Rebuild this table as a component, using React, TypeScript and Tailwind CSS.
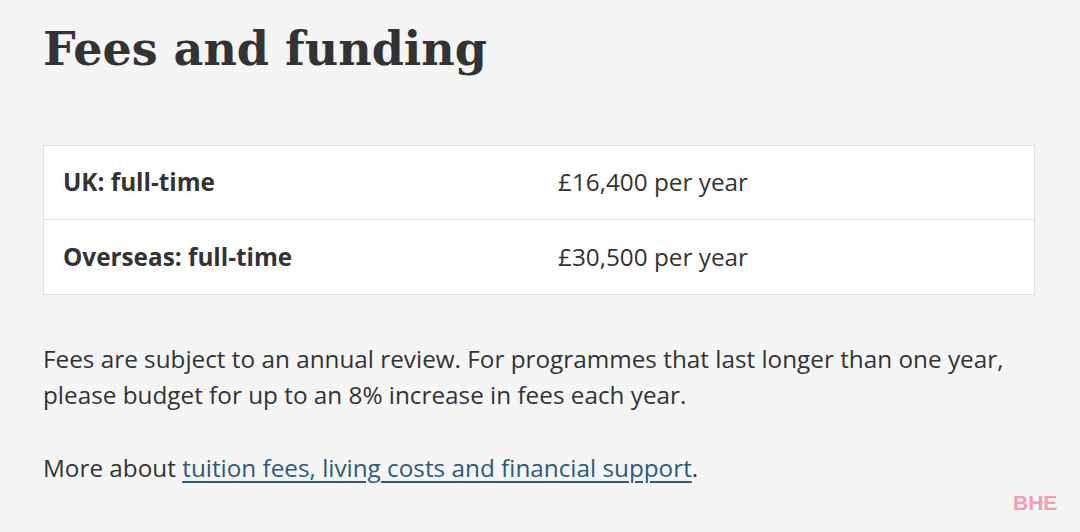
import React from "react";

export default function App() {
  return (
    <div className="w-[1080px] h-[532px] bg-[#f5f5f5] relative overflow-hidden" style={{ fontFamily: '"Open Sans", sans-serif' }}>
      <div className="pl-[43px] pr-[45px] pt-[19px]">
        <h1 className="text-[46px] leading-[60px] font-bold text-[#333333]" style={{ fontFamily: '"DejaVu Serif", serif' }}>
          Fees and funding
        </h1>
        <div className="mt-[66px] border border-[#e0e0e0] bg-white">
          <div className="flex h-[74px] items-center border-b border-[#e0e0e0] text-[24.3px] text-[#333333]">
            <div className="w-1/2 pl-[19px] font-bold">UK: full-time</div>
            <div className="w-1/2 pl-[19px]">£16,400 per year</div>
          </div>
          <div className="flex h-[74px] items-center text-[24.3px] text-[#333333]">
            <div className="w-1/2 pl-[19px] font-bold">Overseas: full-time</div>
            <div className="w-1/2 pl-[19px]">£30,500 per year</div>
          </div>
        </div>
        <p className="mt-[46px] text-[24.3px] leading-[36px] text-[#333333]">
          Fees are subject to an annual review. For programmes that last longer than one year, please budget for up to an 8% increase in fees each year.
        </p>
        <p className="mt-[37px] text-[24.3px] leading-[36px] text-[#333333]">
          More about <a href="#" className="text-[#2a5b7c] underline underline-offset-[4px]">tuition fees, living costs and financial support</a>.
        </p>
      </div>
      <div className="absolute left-[1013px] top-[491px] text-[21px] leading-[24px] font-bold text-[#f2a0b2]" style={{ fontFamily: '"Liberation Sans", sans-serif' }}>
        BHE
      </div>
    </div>
  );
}
